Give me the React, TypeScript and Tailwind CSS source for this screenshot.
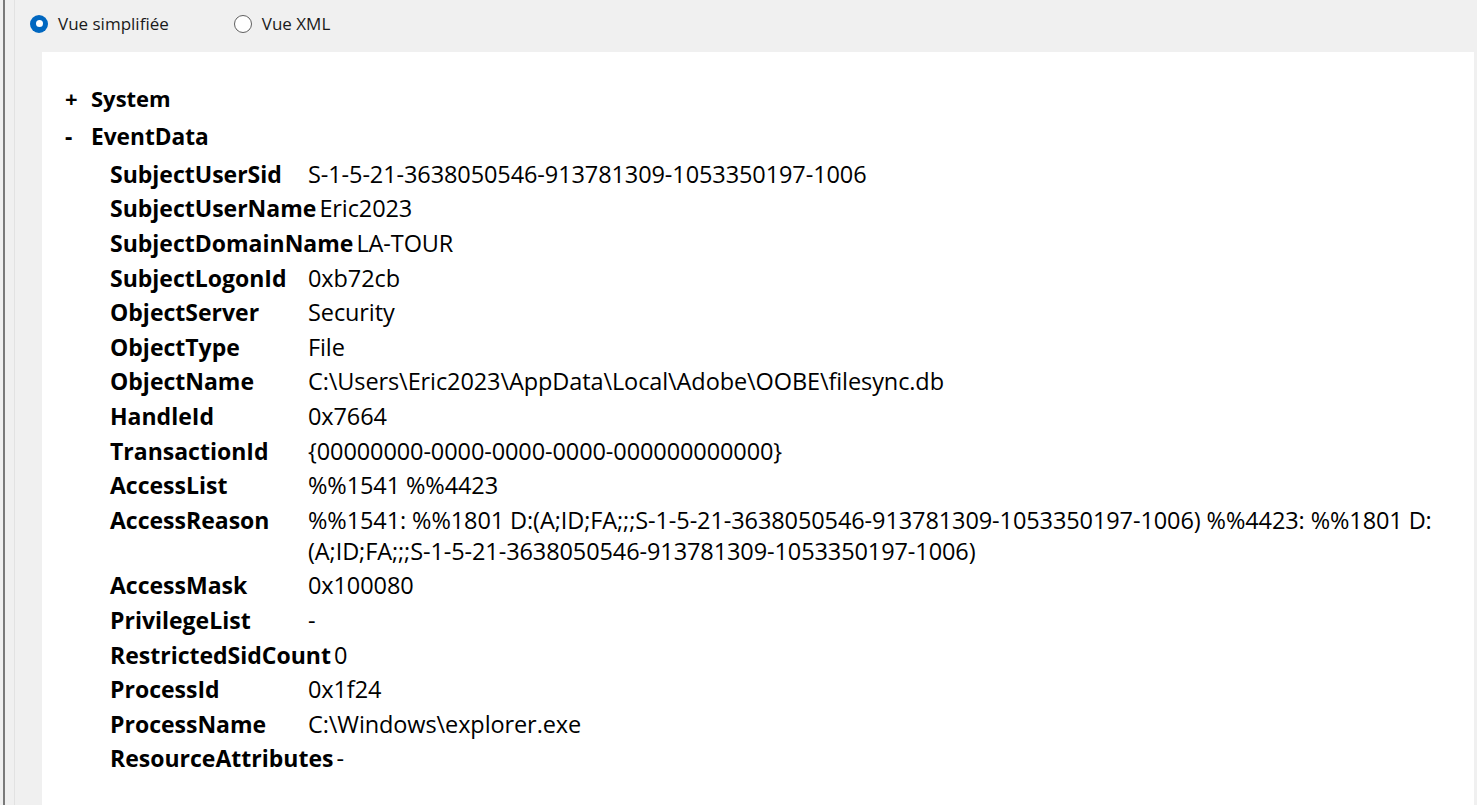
import React from 'react';

const rows: [string, React.ReactNode][] = [
  ['SubjectUserSid', 'S-1-5-21-3638050546-913781309-1053350197-1006'],
  ['SubjectUserName', 'Eric2023'],
  ['SubjectDomainName', 'LA-TOUR'],
  ['SubjectLogonId', '0xb72cb'],
  ['ObjectServer', 'Security'],
  ['ObjectType', 'File'],
  ['ObjectName', 'C:\\Users\\Eric2023\\AppData\\Local\\Adobe\\OOBE\\filesync.db'],
  ['HandleId', '0x7664'],
  ['TransactionId', '{00000000-0000-0000-0000-000000000000}'],
  ['AccessList', '%%1541 %%4423'],
  [
    'AccessReason',
    <>
      %%1541: %%1801 D:
      <wbr />
      (A;ID;FA;;;S-1-5-21-3638050546-913781309-1053350197-1006) %%4423: %%1801 D:
      <wbr />
      (A;ID;FA;;;S-1-5-21-3638050546-913781309-1053350197-1006)
    </>,
  ],
  ['AccessMask', '0x100080'],
  ['PrivilegeList', '-'],
  ['RestrictedSidCount', '0'],
  ['ProcessId', '0x1f24'],
  ['ProcessName', 'C:\\Windows\\explorer.exe'],
  ['ResourceAttributes', '-'],
];

const Radio = ({ checked, label }: { checked: boolean; label: string }) => (
  <label className="flex items-center gap-[10px]">
    {checked ? (
      <span className="w-[18px] h-[18px] rounded-full bg-[#0067c0] flex items-center justify-center">
        <span className="w-[7px] h-[7px] rounded-full bg-white" />
      </span>
    ) : (
      <span className="w-[18px] h-[18px] rounded-full border border-[#5f5f5f] bg-white" />
    )}
    <span className="text-[17px] text-[#1a1a1a]">{label}</span>
  </label>
);

export default function App() {
  return (
    <div
      className="w-[1477px] h-[805px] overflow-hidden bg-[#f0f0f0] flex"
      style={{ fontFamily: '"Open Sans", "Noto Sans", sans-serif' }}
    >
      {/* left window frame */}
      <div className="w-[3px] shrink-0" />
      <div className="w-[2px] shrink-0 bg-[#7a7a7a]" />
      <div className="w-[9px] shrink-0" />
      <div className="w-[1px] shrink-0 bg-[#e2e2e2]" />

      <div className="flex-1 flex flex-col">
        {/* view toggle */}
        <div className="h-[52px] shrink-0 flex items-start pt-[11px] pl-[15px] gap-[65px]">
          <Radio checked label="Vue simplifiée" />
          <Radio checked={false} label="Vue XML" />
        </div>

        <div className="flex-1 flex pl-[27px] pr-[3px]">
          <div className="flex-1 bg-white pt-[27px] pl-[21px] pr-[10px] text-black">
            <div className="flex items-center h-[38px] text-[22px] font-bold">
              <span className="w-[28px] pl-[2px]">+</span>
              <span>System</span>
            </div>
            <div className="flex items-center h-[40px] text-[22.7px] font-bold">
              <span className="w-[28px] pl-[2px]">-</span>
              <span>EventData</span>
            </div>

            <div className="pl-[47px]">
              {rows.map(([k, v]) => (
                <div key={k} className="flex items-start leading-[31px] py-[1.8px]">
                  <span className="font-bold text-[23px] min-w-[198px] pr-[3px] whitespace-nowrap">{k}</span>
                  <span className="flex-1 text-[23.5px] tracking-[-0.1px]">{v}</span>
                </div>
              ))}
            </div>
          </div>
        </div>
      </div>
    </div>
  );
}
